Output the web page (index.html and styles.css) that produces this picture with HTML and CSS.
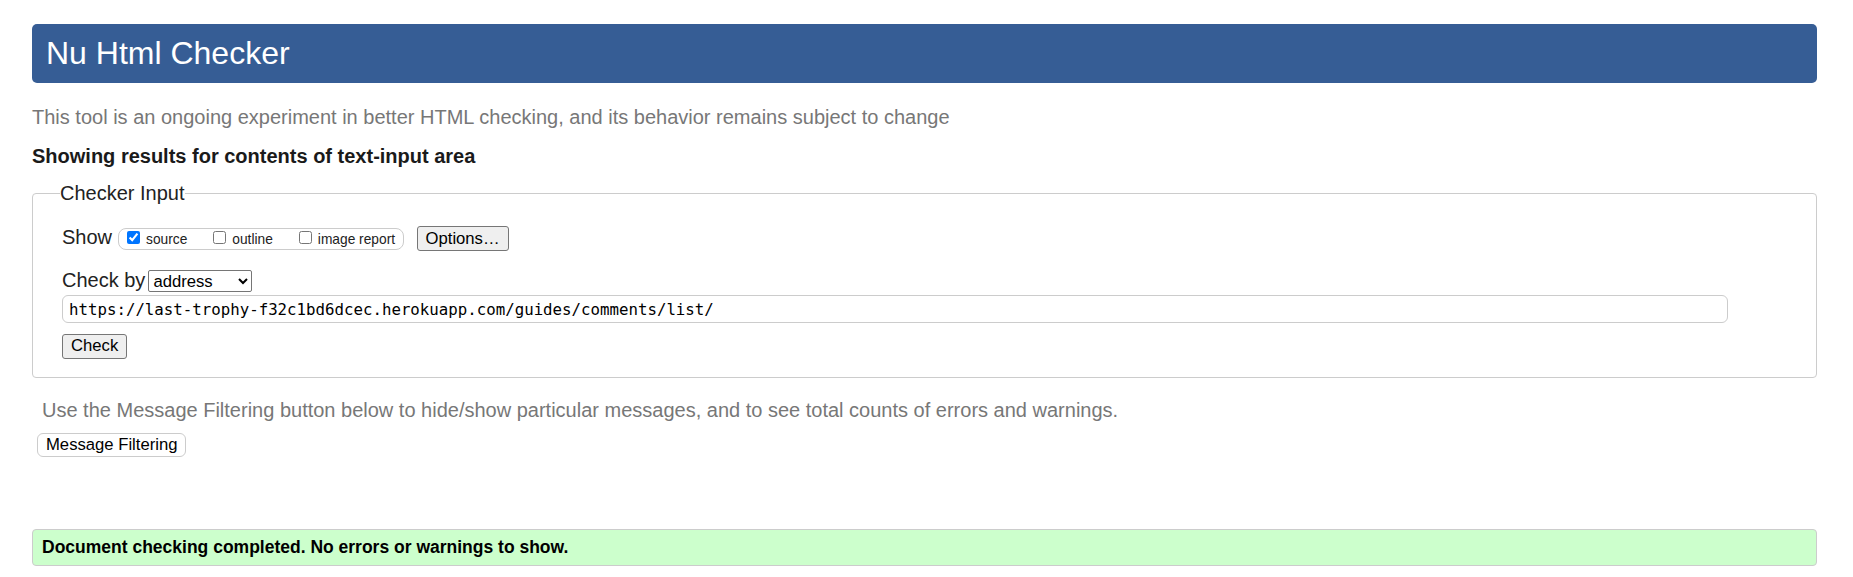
FILE: index.html
```html
<!DOCTYPE html>
<html lang="en">
<head>
<meta charset="utf-8">
<title>Nu Html Checker</title>
<link rel="stylesheet" href="styles.css">
</head>
<body>
<h1 class="title">Nu Html Checker</h1>
<p class="intro">This tool is an ongoing experiment in better HTML checking, and its behavior remains subject to change</p>
<p class="results-for">Showing results for contents of text-input area</p>
<form class="checker-form">
  <fieldset class="checker-input">
    <legend class="legend">Checker Input</legend>
    <div class="row row-show">
      <span class="row-label">Show</span>
      <span class="show-group">
        <label class="opt"><input type="checkbox" class="cb" checked>source</label>
        <label class="opt"><input type="checkbox" class="cb">outline</label>
        <label class="opt"><input type="checkbox" class="cb">image report</label>
      </span>
      <button type="button" class="btn btn-options">Options…</button>
    </div>
    <div class="row row-checkby">
      <span class="row-label">Check by</span>
      <select class="select"><option>address</option></select>
    </div>
    <input class="url" type="text" value="https://last-trophy-f32c1bd6dcec.herokuapp.com/guides/comments/list/">
    <div class="row row-submit">
      <button type="button" class="btn">Check</button>
    </div>
  </fieldset>
</form>
<p class="filter-note">Use the Message Filtering button below to hide/show particular messages, and to see total counts of errors and warnings.</p>
<button type="button" class="btn-filter">Message Filtering</button>
<div class="success">Document checking completed. No errors or warnings to show.</div>
</body>
</html>
```
FILE: styles.css
```css
html, body {
  background: #ffffff;
}

body {
  margin: 0;
  padding: 24px 36px 0 32px;
  font-family: "Liberation Sans", Arial, sans-serif;
  color: #222222;
}

.title {
  margin: 0;
  height: 59px;
  padding: 0 14px;
  line-height: 59px;
  font-size: 32px;
  font-weight: normal;
  color: #ffffff;
  background: #365d95;
  border-radius: 5px;
}

.intro {
  margin: 23px 0 0;
  font-size: 20px;
  color: #777777;
}

.results-for {
  margin: 16px 0 0;
  font-size: 20px;
  font-weight: bold;
  color: #1a1a1a;
}

.checker-form {
  margin: 13.5px 0 0;
}

.checker-input {
  margin: 0;
  padding: 0 88px 18.5px 29px;
  border: 1px solid #cccccc;
  border-radius: 4px;
  min-width: 0;
}

.legend {
  margin-left: -2px;
  padding: 0;
  font-size: 20px;
  color: #222222;
}

.row {
  display: flex;
  align-items: baseline;
}

.row-show {
  margin-top: 21px;
}

.row-label {
  font-size: 20px;
  color: #222222;
}

.row-show .row-label {
  margin-right: 6px;
}

.show-group {
  display: inline-flex;
  align-items: baseline;
  gap: 26px;
  padding: 2px 8px 2px 8px;
  border: 1px solid #cccccc;
  border-radius: 8px;
  font-size: 13.75px;
  color: #222222;
}

.opt {
  display: inline-block;
}

.cb {
  width: 13px;
  height: 13px;
  margin: 0 6px 1px 0;
  vertical-align: baseline;
}

.btn {
  font-family: "Liberation Sans", Arial, sans-serif;
  font-size: 16.67px;
  color: #000000;
  background: #efefef;
  border: 1px solid #767676;
  border-radius: 3px;
  padding: 1.5px 8px;
}

.btn-options {
  margin-left: 12.5px;
}

.row-checkby {
  margin-top: 17.5px;
}

.select {
  margin-left: 3px;
  width: 104px;
  height: 22.5px;
  font-family: "Liberation Sans", Arial, sans-serif;
  font-size: 16.67px;
  color: #000000;
  background: #ffffff;
  border: 1px solid #767676;
  border-radius: 2px;
}

.url {
  display: block;
  box-sizing: border-box;
  width: 100%;
  height: 28px;
  margin: 3px 0 0;
  padding: 0 6px;
  font-family: "DejaVu Sans Mono", "Liberation Mono", monospace;
  font-size: 15.75px;
  color: #000000;
  border: 1px solid #cccccc;
  border-radius: 6px;
  background: #ffffff;
}

.row-submit {
  margin-top: 10.5px;
}

.filter-note {
  margin: 20.5px 0 0 10px;
  font-size: 20px;
  color: #777777;
}

.btn-filter {
  display: block;
  margin: 11px 0 0 5px;
  padding: 1px 8px;
  font-family: "Liberation Sans", Arial, sans-serif;
  font-size: 16.67px;
  color: #000000;
  background: #ffffff;
  border: 1px solid #cccccc;
  border-radius: 6px;
}

.success {
  margin-top: 72px;
  padding: 7px 9px;
  font-size: 17.5px;
  font-weight: bold;
  color: #000000;
  background: #ccffcc;
  border: 1px solid #cccccc;
  border-radius: 4px;
}
```
